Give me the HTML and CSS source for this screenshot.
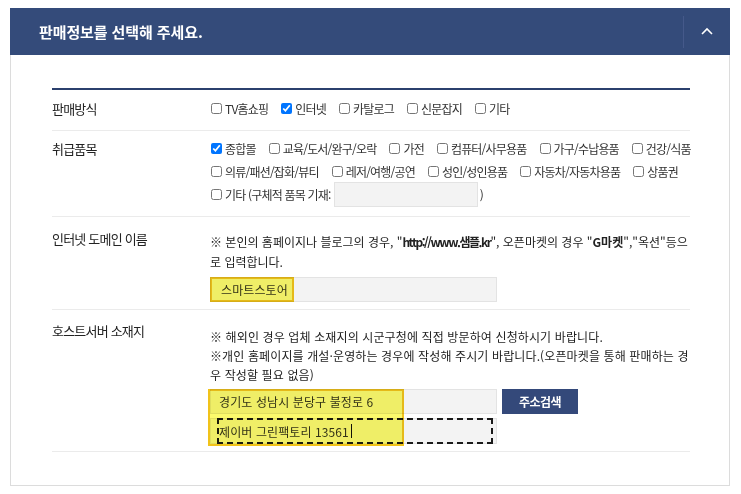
FILE: index.html
```html
<!DOCTYPE html>
<html lang="ko">
<head>
<meta charset="utf-8">
<title>판매정보</title>
<link rel="stylesheet" href="styles.css">
</head>
<body>
<div class="card">
  <div class="head">
    <h2 class="title">판매정보를 선택해 주세요.</h2>
    <div class="toggle">
      <svg width="12" height="8" viewBox="0 0 12 8"><polyline points="1,7 6,2 11,7" fill="none" stroke="#fff" stroke-width="1.6"/></svg>
    </div>
  </div>
  <div class="body">
    <div class="table">
      <div class="row r1">
        <div class="label">판매방식</div>
        <div class="value">
          <div class="opts">
            <label class="opt"><input type="checkbox">TV홈쇼핑</label>
            <label class="opt"><input type="checkbox" checked>인터넷</label>
            <label class="opt"><input type="checkbox">카탈로그</label>
            <label class="opt"><input type="checkbox">신문잡지</label>
            <label class="opt"><input type="checkbox">기타</label>
          </div>
        </div>
      </div>
      <div class="row r2">
        <div class="label">취급품목</div>
        <div class="value">
          <div class="opts">
            <label class="opt"><input type="checkbox" checked>종합몰</label>
            <label class="opt"><input type="checkbox">교육/도서/완구/오락</label>
            <label class="opt"><input type="checkbox">가전</label>
            <label class="opt"><input type="checkbox">컴퓨터/사무용품</label>
            <label class="opt"><input type="checkbox">가구/수납용품</label>
            <label class="opt"><input type="checkbox">건강/식품</label>
          </div>
          <div class="opts">
            <label class="opt"><input type="checkbox">의류/패션/잡화/뷰티</label>
            <label class="opt"><input type="checkbox">레저/여행/공연</label>
            <label class="opt"><input type="checkbox">성인/성인용품</label>
            <label class="opt"><input type="checkbox">자동차/자동차용품</label>
            <label class="opt"><input type="checkbox">상품권</label>
          </div>
          <div class="opts">
            <label class="opt"><input type="checkbox">기타 (구체적 품목 기재:<span class="etc"></span>)</label>
          </div>
        </div>
      </div>
      <div class="row r3">
        <div class="label lift">인터넷 도메인 이름</div>
        <div class="value">
          <p class="note">※ 본인의 홈페이지나 블로그의 경우, "<b class="cond">http://www.샘플.kr</b>", 오픈마켓의 경우 "<b>G마켓</b>","옥션"등으<br>로 입력합니다.</p>
          <div class="field wide">
            <div class="input"><span class="hl-text">스마트스토어</span></div>
            <div class="mark mark-domain"></div>
          </div>
        </div>
      </div>
      <div class="row r4">
        <div class="label lift more">호스트서버 소재지</div>
        <div class="value">
          <p class="note tight">※ 해외인 경우 업체 소재지의 시군구청에 직접 방문하여 신청하시기 바랍니다.<br>※개인 홈페이지를 개설·운영하는 경우에 작성해 주시기 바랍니다.(오픈마켓을 통해 판매하는 경<br>우 작성할 필요 없음)</p>
          <div class="addr">
            <div class="addr-line">
              <div class="input">경기도 성남시 분당구 불정로 6</div>
              <button class="btn">주소검색</button>
            </div>
            <div class="addr-line">
              <div class="input tall"><span class="focus">제이버 그린팩토리 13561<i class="caret"></i></span></div>
            </div>
            <div class="mark mark-addr"></div>
          </div>
        </div>
      </div>
    </div>
  </div>
</div>
</body>
</html>
```
FILE: styles.css
```css
* { box-sizing: border-box; }
html, body { margin: 0; padding: 0; background: #fff; }
body {
  font-family: "Noto Sans CJK KR", "Noto Sans", sans-serif;
  font-size: 12px;
  color: #333;
  letter-spacing: -0.8px;
}
.card {
  width: 720px;
  margin: 8px 0 0 10px;
}
.head {
  height: 47px;
  background: #344b7a;
  display: flex;
  align-items: center;
  justify-content: space-between;
}
.title {
  margin: 0 0 0 29px;
  font-size: 15px;
  font-weight: 700;
  color: #fff;
  letter-spacing: -0.1px;
}
.toggle {
  width: 47px;
  height: 32px;
  border-left: 1px solid #45598a;
  display: flex;
  align-items: center;
  justify-content: center;
  padding-bottom: 2px;
}
.toggle svg { display: block; }
.body {
  border: 1px solid #dcdcdc;
  border-top: none;
  padding: 33px 39px 33px 41px;
}
.table {
  border-top: 2px solid #2b406d;
}
.row {
  display: flex;
  border-bottom: 1px solid #ebebeb;
}
.label {
  width: 158px;
  flex: none;
  font-size: 13px;
  color: #222;
  letter-spacing: -0.8px;
  line-height: 23px;
}
.value { flex: 1; min-width: 0; }
.r1 { padding: 7px 0 10px; }
.r2 { padding: 6px 0 10px; }
.r3 { padding: 15px 0 7px; }
.r4 { padding: 17px 0 7px; }
.r3 .label, .r4 .label { line-height: 20px; }
.lift { margin-top: -3px; }
.lift.more { margin-top: -6px; }
.opts {
  display: flex;
  gap: 12px;
  height: 23px;
  align-items: center;
}
.opt {
  display: flex;
  align-items: center;
  white-space: nowrap;
}
.opt input {
  width: 11px;
  height: 11px;
  margin: 0 3px 0 1px;
  flex: none;
}
.etc {
  display: inline-block;
  width: 144px;
  height: 25px;
  background: #f3f3f3;
  border: 1px solid #e3e3e3;
  margin: 0 2px 0 3px;
}
.note {
  margin: 0;
  line-height: 20px;
  white-space: nowrap;
  color: #222;
  letter-spacing: 0;
}
.note.tight { line-height: 19px; letter-spacing: 0.12px; }
.note b { font-weight: 700; }
.cond { letter-spacing: -1.5px; }
.field {
  position: relative;
  margin-top: 5px;
  width: 287px;
}
.input {
  width: 287px;
  height: 25px;
  background: #f3f3f3;
  border: 1px solid #e3e3e3;
  display: flex;
  align-items: center;
  padding-left: 8px;
  color: #333;
  letter-spacing: 0.1px;
}
.input.tall { height: 26px; padding-left: 6px; }
.hl-text { padding-left: 2px; }
.addr {
  position: relative;
  margin-top: 5px;
  display: flex;
  flex-direction: column;
  gap: 4px;
}
.addr-line {
  display: flex;
  gap: 5px;
}
.btn {
  width: 76px;
  height: 25px;
  border: none;
  background: #34497a;
  color: #fff;
  font-family: inherit;
  font-size: 12px;
  font-weight: 700;
  letter-spacing: -0.5px;
  padding: 0;
}
.focus {
  display: flex;
  align-items: center;
  width: 276px;
  height: 26px;
  border: 2px dashed #1a1a1a;
  padding-left: 0;
}
.caret {
  display: inline-block;
  width: 1px;
  height: 14px;
  background: #111;
  margin-left: 2px;
}
.mark {
  position: absolute;
  background: #fbfa6c;
  border: 2px solid #f1c31a;
  mix-blend-mode: multiply;
  pointer-events: none;
}
.mark-domain { left: 0; top: 0; width: 84px; height: 25px; }
.mark-addr { left: -2px; top: 0; width: 196px; height: 57px; }
```
